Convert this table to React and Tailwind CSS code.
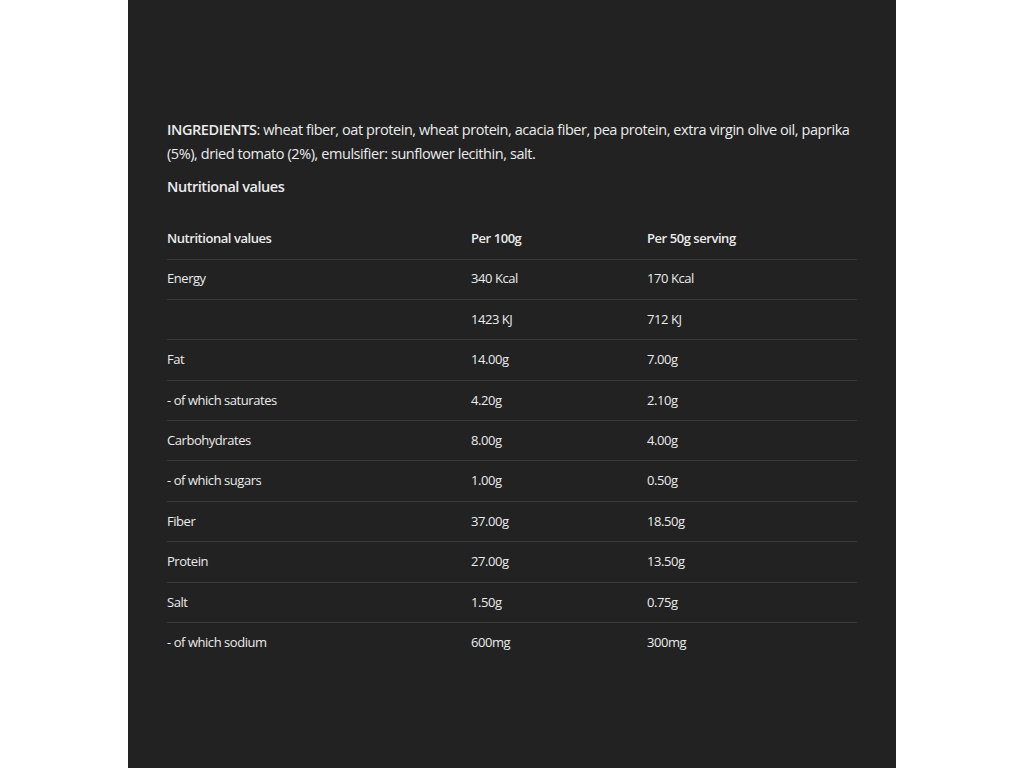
const rows = [
  ['Energy', '340 Kcal', '170 Kcal'],
  ['', '1423 KJ', '712 KJ'],
  ['Fat', '14.00g', '7.00g'],
  ['- of which saturates', '4.20g', '2.10g'],
  ['Carbohydrates', '8.00g', '4.00g'],
  ['- of which sugars', '1.00g', '0.50g'],
  ['Fiber', '37.00g', '18.50g'],
  ['Protein', '27.00g', '13.50g'],
  ['Salt', '1.50g', '0.75g'],
  ['- of which sodium', '600mg', '300mg'],
]

export default function App() {
  return (
    <div className="min-h-screen bg-white flex justify-center">
      <div
        className="w-[768px] h-[768px] bg-[#222222] text-[#ebebeb] px-[39px] pt-[118px]"
        style={{ fontFamily: '"Open Sans", "Noto Sans", sans-serif' }}
      >
        <p className="text-[14.5px] leading-[24px] tracking-[-0.43px]">
          <span className="font-semibold">INGREDIENTS</span>: wheat fiber, oat protein, wheat protein, acacia fiber, pea protein, extra virgin olive oil, paprika (5%), dried tomato (2%), emulsifier: sunflower lecithin, salt.
        </p>
        <h3 className="mt-[9px] text-[14.5px] leading-[24px] font-semibold tracking-[-0.45px]">Nutritional values</h3>

        <table className="mt-[20px] w-[690px] text-[13px] tracking-[-0.45px] border-collapse">
          <thead>
            <tr className="border-b border-[#3a3a3a] h-[40px]">
              <th className="w-[304px] text-left font-semibold p-0">Nutritional values</th>
              <th className="w-[176px] text-left font-semibold p-0">Per 100g</th>
              <th className="text-left font-semibold p-0">Per 50g serving</th>
            </tr>
          </thead>
          <tbody>
            {rows.map((r, i) => (
              <tr
                key={i}
                className={`h-[40.4px] ${i < rows.length - 1 ? 'border-b border-[#3a3a3a]' : ''}`}
              >
                <td className="p-0">{r[0]}</td>
                <td className="p-0">{r[1]}</td>
                <td className="p-0">{r[2]}</td>
              </tr>
            ))}
          </tbody>
        </table>
      </div>
    </div>
  )
}
